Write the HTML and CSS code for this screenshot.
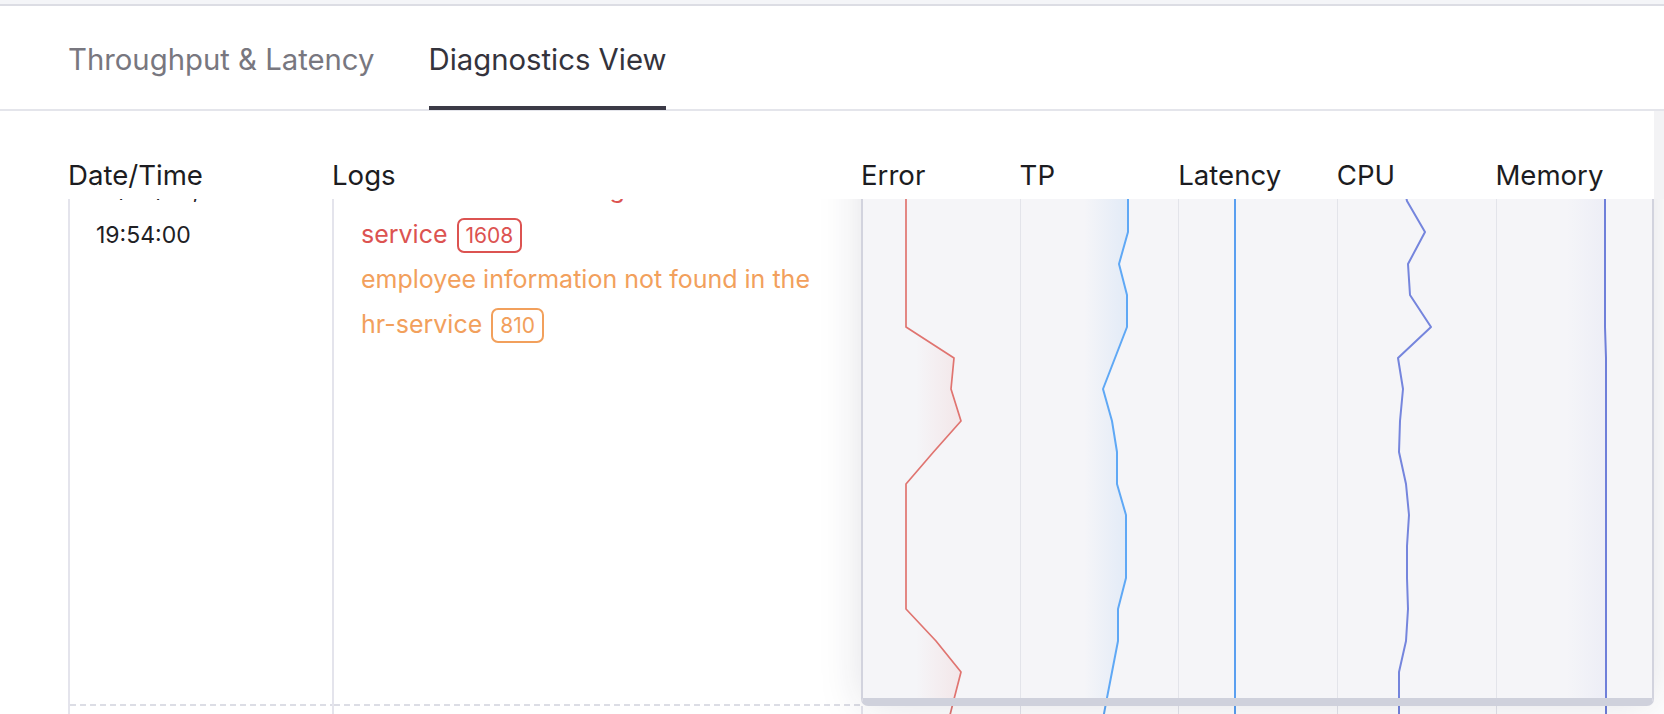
FILE: index.html
```html
<!DOCTYPE html>
<html lang="en">
<head>
<meta charset="utf-8">
<title>Diagnostics View</title>
<link rel="stylesheet" href="styles.css">
</head>
<body>
<div class="app">
  <div class="topstrip"></div>
  <nav class="tabs">
    <div class="tab">Throughput &amp; Latency</div>
    <div class="tab active">Diagnostics View</div>
  </nav>
  <div class="viewport">
    <div class="table">
      <div class="thead">
        <div class="th">Date/Time</div>
        <div class="th">Logs</div>
        <div class="th-metrics">
          <div class="th">Error</div>
          <div class="th">TP</div>
          <div class="th">Latency</div>
          <div class="th">CPU</div>
          <div class="th">Memory</div>
        </div>
      </div>
      <div class="tbody-scroll">
        <div class="tbody">
          <div class="row row-first">
            <div class="cell cell-date dashed">
              <div>12/03/24,</div>
              <div>19:54:00</div>
            </div>
            <div class="cell cell-logs dashed">
              <div class="log log-error">timed out while calling auth-<span class="nb">service<span class="badge">1608</span></span></div>
              <div class="log log-warn">employee information not found in the <span class="nb">hr-service<span class="badge">810</span></span></div>
            </div>
            <div class="cell panel">
              <svg class="chart chart-panel" viewBox="863 149 789 549" width="789" height="549">
                <defs>
                  <linearGradient id="gRed" gradientUnits="userSpaceOnUse" x1="916" y1="0" x2="962" y2="0">
                    <stop offset="0" stop-color="#e4807c" stop-opacity="0"/>
                    <stop offset="1" stop-color="#e4807c" stop-opacity="0.13"/>
                  </linearGradient>
                  <linearGradient id="gTp" gradientUnits="userSpaceOnUse" x1="1084" y1="0" x2="1128" y2="0">
                    <stop offset="0" stop-color="#7fb4f0" stop-opacity="0"/>
                    <stop offset="1" stop-color="#7fb4f0" stop-opacity="0.16"/>
                  </linearGradient>
                  <linearGradient id="gMem" gradientUnits="userSpaceOnUse" x1="1566" y1="0" x2="1606" y2="0">
                    <stop offset="0" stop-color="#8e99e2" stop-opacity="0"/>
                    <stop offset="1" stop-color="#8e99e2" stop-opacity="0.08"/>
                  </linearGradient>
                </defs>
                <g class="gridlines">
                  <line x1="1020.5" y1="100" x2="1020.5" y2="900"/>
                  <line x1="1178.5" y1="100" x2="1178.5" y2="900"/>
                  <line x1="1337.5" y1="100" x2="1337.5" y2="900"/>
                  <line x1="1496.5" y1="100" x2="1496.5" y2="900"/>
                </g>
                <polygon fill="url(#gRed)" points="906,138 906,170 906,201 906,232 906,264 906,295 906,327 954,358 951,389 961,421 933.5,452 906,484 906,515 906,546 906,578 906,609 936,641 961,672 953,703 945,735 930,766 920,798 915,829 863,829 863,138"/>
                <polygon fill="url(#gTp)" points="1128,138 1128,170 1128,201 1128,232 1119,264 1127,295 1127,327 1115,358 1103,389 1112,421 1117,452 1117,484 1126,515 1126,546 1126,578 1118,609 1118,641 1112,672 1106,703 1100,735 1104,766 1110,798 1108,829 1020,829 1020,138"/>
                <polygon fill="url(#gMem)" points="1605,138 1605,327 1606,358 1606,829 1496,829 1496,138"/>
                <polyline class="s-red" points="906,138 906,170 906,201 906,232 906,264 906,295 906,327 954,358 951,389 961,421 933.5,452 906,484 906,515 906,546 906,578 906,609 936,641 961,672 953,703 945,735 930,766 920,798 915,829"/>
                <polyline class="s-tp" points="1128,138 1128,170 1128,201 1128,232 1119,264 1127,295 1127,327 1115,358 1103,389 1112,421 1117,452 1117,484 1126,515 1126,546 1126,578 1118,609 1118,641 1112,672 1106,703 1100,735 1104,766 1110,798 1108,829"/>
                <polyline class="s-lat" points="1235,138 1235,829"/>
                <polyline class="s-cpu" points="1396,138 1400,170 1407,201 1425,232 1408,264 1410,295 1431,327 1398,358 1403,389 1400,421 1399,452 1406,484 1409,515 1407,546 1407,578 1408,609 1406,641 1399,672 1399,703 1399,735 1401,766 1400,798 1400,829"/>
                <polyline class="s-mem" points="1605,138 1605,327 1606,358 1606,829"/>
              </svg>
            </div>
          </div>
          <div class="row row-next">
            <div class="cell cell-date"></div>
            <div class="cell cell-logs"></div>
            <div class="cell cell-chart">
              <svg class="chart chart-next" viewBox="863 706 791 300" width="791" height="300">
                <g class="gridlines">
                  <line x1="1020.5" y1="600" x2="1020.5" y2="1100"/>
                  <line x1="1178.5" y1="600" x2="1178.5" y2="1100"/>
                  <line x1="1337.5" y1="600" x2="1337.5" y2="1100"/>
                  <line x1="1496.5" y1="600" x2="1496.5" y2="1100"/>
                </g>
                <polyline class="s-red" points="961,672 953,703 945,735 930,766 920,798 915,829 915,1000"/>
                <polyline class="s-tp" points="1112,672 1106,703 1100,735 1104,766 1110,798 1108,829 1108,1000"/>
                <polyline class="s-lat" points="1235,600 1235,1000"/>
                <polyline class="s-cpu" points="1399,672 1399,703 1399,735 1401,766 1400,798 1400,829 1400,1000"/>
                <polyline class="s-mem" points="1606,600 1606,1000"/>
              </svg>
            </div>
          </div>
        </div>
      </div>
    </div>
  </div>
</div>
</body>
</html>
```

FILE: styles.css
```css
* {
  box-sizing: border-box;
}

html,
body {
  margin: 0;
  padding: 0;
  background: #ffffff;
}

body {
  width: 1664px;
  height: 714px;
  overflow: hidden;
  font-family: Inter, "Noto Sans", "Liberation Sans", sans-serif;
  color: #1c1c22;
}

.topstrip {
  height: 6px;
  background: #f4f5f8;
  border-bottom: 2px solid #dcdde4;
}

.tabs {
  height: 105px;
  display: flex;
  align-items: flex-start;
  gap: 54px;
  padding-left: 68px;
  border-bottom: 2px solid #e4e5eb;
}

.tab {
  height: 104px;
  padding-top: 36px;
  font-size: 29.3px;
  line-height: 36px;
  color: #78777f;
  white-space: nowrap;
  border-bottom: 4px solid transparent;
}

.tab.active {
  color: #34333c;
  border-bottom-color: #3b3a46;
}

.viewport {
  height: 603px;
  overflow: hidden;
  background: linear-gradient(to right, #ffffff 0 1654px, #f3f3f5 1654px);
}

.table {
  width: 1664px;
}

.thead {
  width: 1654px;
  height: 88px;
  padding: 47px 0 0 68px;
  background: #ffffff;
  display: grid;
  grid-template-columns: 264px 529px 1fr;
  font-size: 27.6px;
  line-height: 34px;
  color: #1c1c21;
}

.th {
  white-space: nowrap;
}

.th-metrics {
  display: grid;
  grid-template-columns: repeat(5, 1fr);
}

.tbody-scroll {
  height: 515px;
  overflow: hidden;
  background: #ffffff;
}

.tbody {
  width: 1654px;
  margin-top: -50px;
}

.row {
  display: grid;
  grid-template-columns: 264px 529px 1fr;
  padding-left: 68px;
}

.row-first {
  height: 557px;
}

.row-next {
  height: 300px;
}

.cell {
  border-left: 2px solid #e4e4ec;
}

.dashed {
  background-image: repeating-linear-gradient(to right, #dcdde5 0 6px, transparent 6px 10px);
  background-size: 100% 2px;
  background-repeat: no-repeat;
  background-position: left bottom;
}

.cell-date {
  padding: 19px 0 0 26px;
  font-size: 23px;
  line-height: 45px;
  color: #202024;
}

.cell-logs {
  padding: 18px 31px 0 27px;
  font-size: 25px;
  line-height: 45px;
}

.log-error {
  color: #dc5351;
}

.log-warn {
  color: #f2a05c;
}

.nb {
  white-space: nowrap;
}

.badge {
  display: inline-block;
  margin-left: 9px;
  padding: 0 7px;
  border: 2px solid currentColor;
  border-radius: 7px;
  font-size: 21px;
  line-height: 31px;
}

.panel {
  position: relative;
  z-index: 2;
  background: #f5f5f8;
  border-left: 2px solid #d2d3de;
  border-right: 2px solid #d2d3de;
  border-bottom: 8px solid #cfd1dc;
  border-radius: 0 0 7px 7px;
  box-shadow: 0 0 44px rgba(30, 30, 60, 0.13);
}

.chart {
  display: block;
}

.gridlines line {
  stroke: #e3e4ea;
  stroke-width: 1;
}

.chart polyline {
  fill: none;
  stroke-linejoin: round;
}

.s-red {
  stroke: #e07470;
  stroke-width: 1.7;
}

.s-tp {
  stroke: #5fa8f5;
  stroke-width: 2;
}

.s-lat {
  stroke: #5a9ff0;
  stroke-width: 2;
}

.s-cpu {
  stroke: #7585dd;
  stroke-width: 2;
}

.s-mem {
  stroke: #6f7fd9;
  stroke-width: 2;
}
```
